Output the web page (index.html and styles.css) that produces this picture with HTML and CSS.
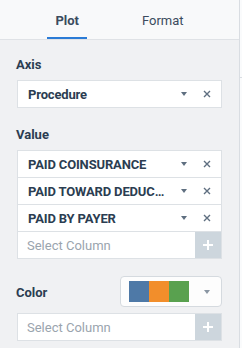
FILE: index.html
```html
<!DOCTYPE html>
<html lang="en">
<head>
    <meta charset="UTF-8">
    <meta name="viewport" content="width=device-width, initial-scale=1.0">
    <title>Chart Editor</title>
    <link rel="stylesheet" href="styles.css">
</head>
<body>
    <div class="panel">
        <div class="tabs">
            <div class="tab active">Plot</div>
            <div class="tab">Format</div>
        </div>

        <div class="section">
            <div class="label">Axis</div>
            <div class="field-list">
                <div class="field">
                    <span class="field-name">Procedure</span>
                    <span class="caret"></span>
                    <svg class="remove" width="8" height="8" viewBox="0 0 8 8"><path d="M1 1L7 7M7 1L1 7"/></svg>
                </div>
            </div>
        </div>

        <div class="section">
            <div class="label">Value</div>
            <div class="field-list">
                <div class="field">
                    <span class="field-name">PAID COINSURANCE</span>
                    <span class="caret"></span>
                    <svg class="remove" width="8" height="8" viewBox="0 0 8 8"><path d="M1 1L7 7M7 1L1 7"/></svg>
                </div>
                <div class="field">
                    <span class="field-name">PAID TOWARD DEDUC…</span>
                    <span class="caret"></span>
                    <svg class="remove" width="8" height="8" viewBox="0 0 8 8"><path d="M1 1L7 7M7 1L1 7"/></svg>
                </div>
                <div class="field">
                    <span class="field-name">PAID BY PAYER</span>
                    <span class="caret"></span>
                    <svg class="remove" width="8" height="8" viewBox="0 0 8 8"><path d="M1 1L7 7M7 1L1 7"/></svg>
                </div>
                <div class="field select">
                    <span class="placeholder">Select Column</span>
                    <span class="add"><svg width="10" height="10" viewBox="0 0 10 10"><path d="M5 0V10M0 5H10"/></svg></span>
                </div>
            </div>
        </div>

        <div class="section color-section">
            <div class="color-row">
                <div class="label">Color</div>
                <div class="palette">
                    <span class="swatch" style="background:#4e79a7"></span>
                    <span class="swatch" style="background:#f28e2b"></span>
                    <span class="swatch" style="background:#59a14f"></span>
                    <span class="caret"></span>
                </div>
            </div>
            <div class="field-list">
                <div class="field select">
                    <span class="placeholder">Select Column</span>
                    <span class="add"><svg width="10" height="10" viewBox="0 0 10 10"><path d="M5 0V10M0 5H10"/></svg></span>
                </div>
            </div>
        </div>
    </div>
    <div class="edge">
        <div class="edge-line"></div>
    </div>
</body>
</html>
```

FILE: styles.css
```css
body {
    margin: 0;
    display: flex;
    height: 348px;
    overflow: hidden;
    font-family: Roboto, Lato, sans-serif;
    color: #2b3d51;
    background-color: #f0f1f3;
}
.panel {
    width: 239px;
    flex: none;
    border-right: 1px solid #d9dde2;
}
.edge {
    flex: 1;
    background-color: #fafbfc;
}
.edge-line {
    margin-top: 77px;
    border-top: 1px solid #d9dde2;
}
.tabs {
    display: flex;
    justify-content: center;
    gap: 47px;
    height: 39px;
    background-color: #f8f9fa;
    border-bottom: 1px solid #dfe2e6;
}
.tab {
    padding: 13px 8px 0;
    line-height: 16px;
    font-size: 13px;
    color: #3b4b5e;
    border-bottom: 2px solid transparent;
    box-sizing: border-box;
    height: 39px;
}
.tab.active {
    font-weight: bold;
    border-bottom-color: #2b7bd6;
}
.section {
    padding: 17px 17px 0;
}
.section + .section {
    padding-top: 19px;
}
.label {
    font-size: 13px;
    font-weight: bold;
    line-height: 16px;
    margin: 0 0 7px -1px;
}
.field-list {
    background-color: #fff;
    border: 1px solid #dde1e5;
}
.field {
    display: flex;
    align-items: center;
    height: 26px;
    padding-left: 10px;
    font-size: 13px;
    font-weight: bold;
    letter-spacing: -0.15px;
}
.field + .field {
    border-top: 1px solid #dde1e5;
}
.field-name {
    flex: 1;
    white-space: nowrap;
}
.caret {
    width: 0;
    height: 0;
    border-left: 3.5px solid transparent;
    border-right: 3.5px solid transparent;
    border-top: 4px solid #5f6f80;
    margin-right: 16px;
}
.remove {
    margin-right: 10px;
}
.remove path {
    stroke: #5f6f80;
    stroke-width: 1.4;
}
.field.select {
    padding-left: 9px;
    letter-spacing: 0;
}
.placeholder {
    flex: 1;
    font-weight: normal;
    color: #9aa4ae;
}
.add {
    width: 26px;
    height: 26px;
    display: flex;
    align-items: center;
    justify-content: center;
    background-color: #cdd6dd;
}
.add path {
    stroke: #fff;
    stroke-width: 2;
}
.section + .color-section {
    padding-top: 17px;
}
.color-row {
    display: flex;
    align-items: center;
    justify-content: space-between;
    margin-bottom: 6px;
}
.color-row .label {
    margin: 2px 0 0 -1px;
}
.palette {
    display: flex;
    align-items: center;
    width: 102px;
    height: 31px;
    padding-left: 8px;
    box-sizing: border-box;
    background-color: #fdfdfd;
    border: 1px solid #d5dadf;
    border-radius: 4px;
}
.swatch {
    width: 20px;
    height: 21px;
}
.palette .caret {
    margin-left: auto;
    margin-right: 11px;
    border-top-color: #8a96a3;
}
```
